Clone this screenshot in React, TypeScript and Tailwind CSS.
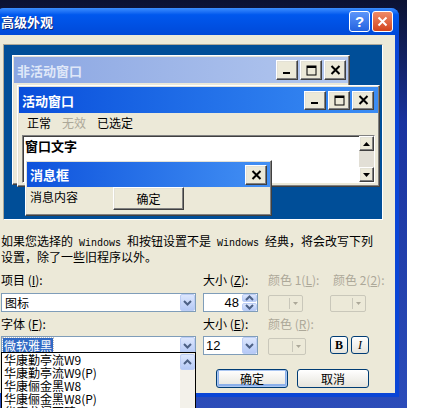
import React from 'react';

const cjk = "font-['Noto_Sans_CJK_SC',sans-serif]";
const mono = "font-['Liberation_Mono',monospace] text-[10px]";
const raised =
  'bg-[#ECE9D8] border border-t-white border-l-white border-r-[#404040] border-b-[#404040] shadow-[inset_-1px_-1px_#808080,inset_1px_1px_#e3e1d6]';

function Glyph({ kind }: { kind: 'min' | 'max' | 'close' }) {
  if (kind === 'min')
    return (
      <svg width="10" height="10" viewBox="0 0 10 10">
        <rect x="1" y="7" width="7" height="2" fill="#000" />
      </svg>
    );
  if (kind === 'max')
    return (
      <svg width="11" height="11" viewBox="0 0 11 11">
        <rect x="1" y="1" width="9" height="9" fill="none" stroke="#000" strokeWidth="1" />
        <rect x="1" y="1" width="9" height="2" fill="#000" />
      </svg>
    );
  return (
    <svg width="11" height="10" viewBox="0 0 11 10">
      <path d="M1.5 1 L9.5 9 M9.5 1 L1.5 9" stroke="#000" strokeWidth="2" />
    </svg>
  );
}

function CaptionBtn({ kind, h = 'h-[20px]' }: { kind: 'min' | 'max' | 'close'; h?: string }) {
  return (
    <div className={`w-[22px] ${h} flex items-center justify-center ${raised}`}>
      <Glyph kind={kind} />
    </div>
  );
}

function Chevron({ up = false }: { up?: boolean }) {
  return (
    <svg width="9" height="6" viewBox="0 0 9 6">
      <path
        d={up ? 'M1 5 L4.5 1.5 L8 5' : 'M1 1 L4.5 4.5 L8 1'}
        fill="none"
        stroke="#4d6185"
        strokeWidth="2"
      />
    </svg>
  );
}

function XpArrow({ up = false, h = 'h-full' }: { up?: boolean; h?: string }) {
  return (
    <div
      className={`w-[15px] ${h} flex items-center justify-center rounded-[2px] border border-[#bccdf5] bg-linear-to-b from-[#dde7fd] to-[#b5c9f6]`}>
      <Chevron up={up} />
    </div>
  );
}

function Combo({ children, w }: { children: React.ReactNode; w: string }) {
  return (
    <div className={`${w} h-[19px] flex items-center border border-[#7f9db9] bg-white`}>
      <div className="flex-1 flex items-center h-full pl-[1px]">{children}</div>
      <div className="h-[17px] pr-[0px]">
        <XpArrow />
      </div>
    </div>
  );
}

function ColorPick({ w }: { w: string }) {
  return (
    <div
      className={`${w} h-[17px] self-end flex items-center justify-end pr-[4px] gap-[3px] rounded-[2px] border border-[#c9c7ba] bg-[#ECE9D8]`}>
      <div className="w-px h-[11px] bg-[#c9c7ba]" />
      <svg width="5" height="3" viewBox="0 0 5 3">
        <path d="M0 0 H5 L2.5 3 Z" fill="#aca899" />
      </svg>
    </div>
  );
}

function XpButton({ children, def = false, w }: { children: React.ReactNode; def?: boolean; w: string }) {
  return (
    <div
      className={`${w} h-[19px] flex items-center justify-center rounded-[3px] border border-[#003c74] bg-linear-to-b from-white to-[#e6e4dc] text-[12px] leading-none ${
        def ? 'shadow-[inset_0_0_0_1px_#aac6f2,inset_0_-1px_0_2px_#8cb0ea]' : ''
      }`}>
      {children}
    </div>
  );
}

function Preview() {
  return (
    <div className="mt-[9px] ml-[3px] w-[380px] h-[176px] relative bg-[#004E98] border border-t-[#aca899] border-l-[#aca899] border-r-white border-b-white">
      {/* inactive window */}
      <div className={`absolute left-[8px] top-[10px] w-[338px] h-[130px] p-[1px] ${raised}`}>
        <div className="h-[26px] flex items-center pl-[3px] pr-[2px] bg-linear-to-r from-[#8ba6e2] to-[#b4c8ef]">
          <span className="text-[#dfe7f8] font-bold text-[13px] leading-none">非活动窗口</span>
          <div className="ml-auto flex gap-[2px]">
            <CaptionBtn kind="min" />
            <CaptionBtn kind="max" />
            <CaptionBtn kind="close" />
          </div>
        </div>
      </div>
      {/* active window */}
      <div className={`absolute left-[13px] top-[40px] w-[363px] h-[102px] p-[1px] flex flex-col ${raised}`}>
        <div className="h-[26px] shrink-0 flex items-center pl-[3px] pr-[4px] bg-linear-to-r from-[#0a4edb] to-[#3b8df4]">
          <span className="text-white font-bold text-[13px] leading-none">活动窗口</span>
          <div className="ml-auto flex gap-[2px]">
            <CaptionBtn kind="min" h="h-[19px]" />
            <CaptionBtn kind="max" h="h-[19px]" />
            <CaptionBtn kind="close" h="h-[19px]" />
          </div>
        </div>
        <div className="h-[20px] flex items-center gap-[11px] pl-[8px] text-[12px] leading-none">
          <span>正常</span>
          <span className="text-[#aca899]">无效</span>
          <span>已选定</span>
        </div>
        <div className="mt-[2px] mx-[3px] h-[48px] flex bg-white border border-t-[#808080] border-l-[#808080] border-r-white border-b-white shadow-[inset_1px_1px_#404040]">
          <span className="flex-1 pl-[2px] pt-[3px] font-bold text-[13px] leading-[14px]">窗口文字</span>
          <div className="w-[15px] flex flex-col">
            <div className={`h-[15px] flex items-center justify-center ${raised}`}>
              <svg width="7" height="4" viewBox="0 0 7 4">
                <path d="M3.5 0 L7 4 H0 Z" fill="#000" />
              </svg>
            </div>
            <div className="flex-1 bg-[#e2dfd6]" />
            <div className={`h-[15px] flex items-center justify-center ${raised}`}>
              <svg width="7" height="4" viewBox="0 0 7 4">
                <path d="M0 0 H7 L3.5 4 Z" fill="#000" />
              </svg>
            </div>
          </div>
        </div>
      </div>
      {/* message box */}
      <div className={`absolute left-[21px] top-[115px] w-[247px] h-[56px] p-[1px] flex flex-col ${raised}`}>
        <div className="h-[25px] shrink-0 flex items-center pl-[3px] pr-[3px] bg-linear-to-r from-[#0f52dc] to-[#4390f4]">
          <span className="text-white font-bold text-[13px] leading-none">消息框</span>
          <div className="ml-auto">
            <CaptionBtn kind="close" />
          </div>
        </div>
        <div className="flex items-start">
          <span className="pl-[3px] pt-[3px] text-[12px] leading-[14px]">消息内容</span>
          <div className={`ml-[35px] w-[71px] h-[23px] flex items-center justify-center text-[12px] leading-none ${raised}`}>
            确定
          </div>
        </div>
      </div>
    </div>
  );
}

function Dialog() {
  return (
    <div className="absolute left-[-4px] top-[8px] w-[403px] h-[389px] flex flex-col rounded-t-[8px] bg-[#0a45d6]">
      <div className="h-[27px] shrink-0 flex items-center pl-[5px] pr-[6px] rounded-t-[8px] bg-linear-to-b from-[#3b8eff] via-[#0058ee] via-25% to-[#0049d8]">
        <span className="text-white font-bold text-[13px] leading-none [text-shadow:1px_1px_#0a2a80]">
          高级外观
        </span>
        <div className="ml-auto flex gap-[2px]">
          <div className="w-[21px] h-[21px] flex items-center justify-center rounded-[3px] border border-white bg-linear-to-b from-[#5c95fa] to-[#2462e0] text-white font-bold text-[15px] leading-none font-['Liberation_Sans',sans-serif]">
            ?
          </div>
          <div className="w-[21px] h-[21px] flex items-center justify-center rounded-[3px] border border-white bg-linear-to-b from-[#ee8a66] to-[#d2431b]">
            <svg width="11" height="11" viewBox="0 0 11 11">
              <path d="M1.5 1.5 L9.5 9.5 M9.5 1.5 L1.5 9.5" stroke="#fff" strokeWidth="2" />
            </svg>
          </div>
        </div>
      </div>
      <div className="flex-1 mx-[4px] mb-[4px] bg-[#ECE9D8] flex flex-col text-[12px] text-black">
        <Preview />
        <p className="mt-[14px] pl-[1px] leading-[13px]">
          如果您选择的<span className={mono}> Windows </span>和按钮设置不是<span className={mono}> Windows </span>
          经典，将会改写下列
          <br />
          设置，除了一些旧程序以外。
        </p>
        <div className="mt-[10px] h-[14px] flex leading-[14px]">
          <span className="w-[203px] pl-[1px]">
            项目 (<u>I</u>):
          </span>
          <span className="w-[65px]">
            大小 (<u>Z</u>):
          </span>
          <span className="w-[65px] text-[#aca899]">
            颜色 1(<u>L</u>):
          </span>
          <span className="text-[#aca899]">
            颜色 2(<u>2</u>):
          </span>
        </div>
        <div className="mt-[6px] h-[19px] flex">
          <div className="ml-[1px]">
            <Combo w="w-[195px]">
              <span className="pl-[2px] leading-none">图标</span>
            </Combo>
          </div>
          <div className="ml-[7px] w-[55px] h-[19px] flex items-center border border-[#7f9db9] bg-white">
            <span className="flex-1 text-right pr-[3px] text-[13px] leading-none font-['Liberation_Sans',sans-serif]">
              48
            </span>
            <div className="w-[15px] h-[17px] flex flex-col gap-px">
              <XpArrow up h="h-[8px]" />
              <XpArrow h="h-[8px]" />
            </div>
          </div>
          <div className="ml-[10px] flex">
            <ColorPick w="w-[35px]" />
          </div>
          <div className="ml-[27px] flex">
            <ColorPick w="w-[36px]" />
          </div>
        </div>
        <div className="mt-[5px] h-[14px] flex leading-[14px]">
          <span className="w-[203px] pl-[1px]">
            字体 (<u>F</u>):
          </span>
          <span className="w-[65px]">
            大小 (<u>E</u>):
          </span>
          <span className="text-[#aca899]">
            颜色 (<u>R</u>):
          </span>
        </div>
        <div className="mt-[5px] h-[19px] flex">
          <div className="ml-[1px]">
            <Combo w="w-[195px]">
              <span className="px-px py-[1px] bg-[#316ac5] text-white leading-[14px] outline-1 outline-dotted outline-[#c0c0c0]">
                微软雅黑
              </span>
            </Combo>
          </div>
          <div className="ml-[7px]">
            <Combo w="w-[55px]">
              <span className="pl-[1px] text-[13px] leading-none font-['Liberation_Sans',sans-serif]">12</span>
            </Combo>
          </div>
          <div className="ml-[10px] flex">
            <ColorPick w="w-[38px]" />
          </div>
          <div className="ml-[24px] w-[18px] h-[18px] flex items-center justify-center rounded-[3px] border border-[#003c74] bg-linear-to-b from-white to-[#e6e4dc] font-bold text-[12px] leading-none font-['Liberation_Serif',serif]">
            B
          </div>
          <div className="ml-[3px] w-[18px] h-[18px] flex items-center justify-center rounded-[3px] border border-[#003c74] bg-linear-to-b from-white to-[#e6e4dc] italic text-[12px] leading-none font-['Liberation_Serif',serif]">
            I
          </div>
        </div>
        <div className="mt-[14px] flex">
          <div className="ml-[216px]">
            <XpButton def w="w-[72px]">
              确定
            </XpButton>
          </div>
          <div className="ml-[9px]">
            <XpButton w="w-[72px]">取消</XpButton>
          </div>
        </div>
      </div>
    </div>
  );
}

const fonts = ['华康勤亭流W9', '华康勤亭流W9(P)', '华康俪金黑W8', '华康俪金黑W8(P)', '华康龙门石碑W9'];

function FontList() {
  return (
    <div className="absolute left-[1px] top-[352px] w-[195px] h-[62px] border border-black bg-white flex">
      <ul className="flex-1 pl-[2px] text-[12px]">
        {fonts.map((f) => (
          <li key={f} className="h-[13px] leading-[13px] whitespace-nowrap">
            {f}
          </li>
        ))}
      </ul>
      <div className="w-[15px] bg-[#f3f1ea] pt-px">
        <XpArrow up h="h-[16px]" />
      </div>
    </div>
  );
}

export default function App() {
  return (
    <div className={`relative w-[443px] h-[408px] overflow-hidden flex ${cjk}`}>
      <div className="w-[407px] h-full bg-linear-to-b from-[#0b1233] via-[#1a339f] via-30% to-[#2c4cb9]" />
      <div className="flex-1 bg-white" />
      <Dialog />
      <FontList />
    </div>
  );
}
